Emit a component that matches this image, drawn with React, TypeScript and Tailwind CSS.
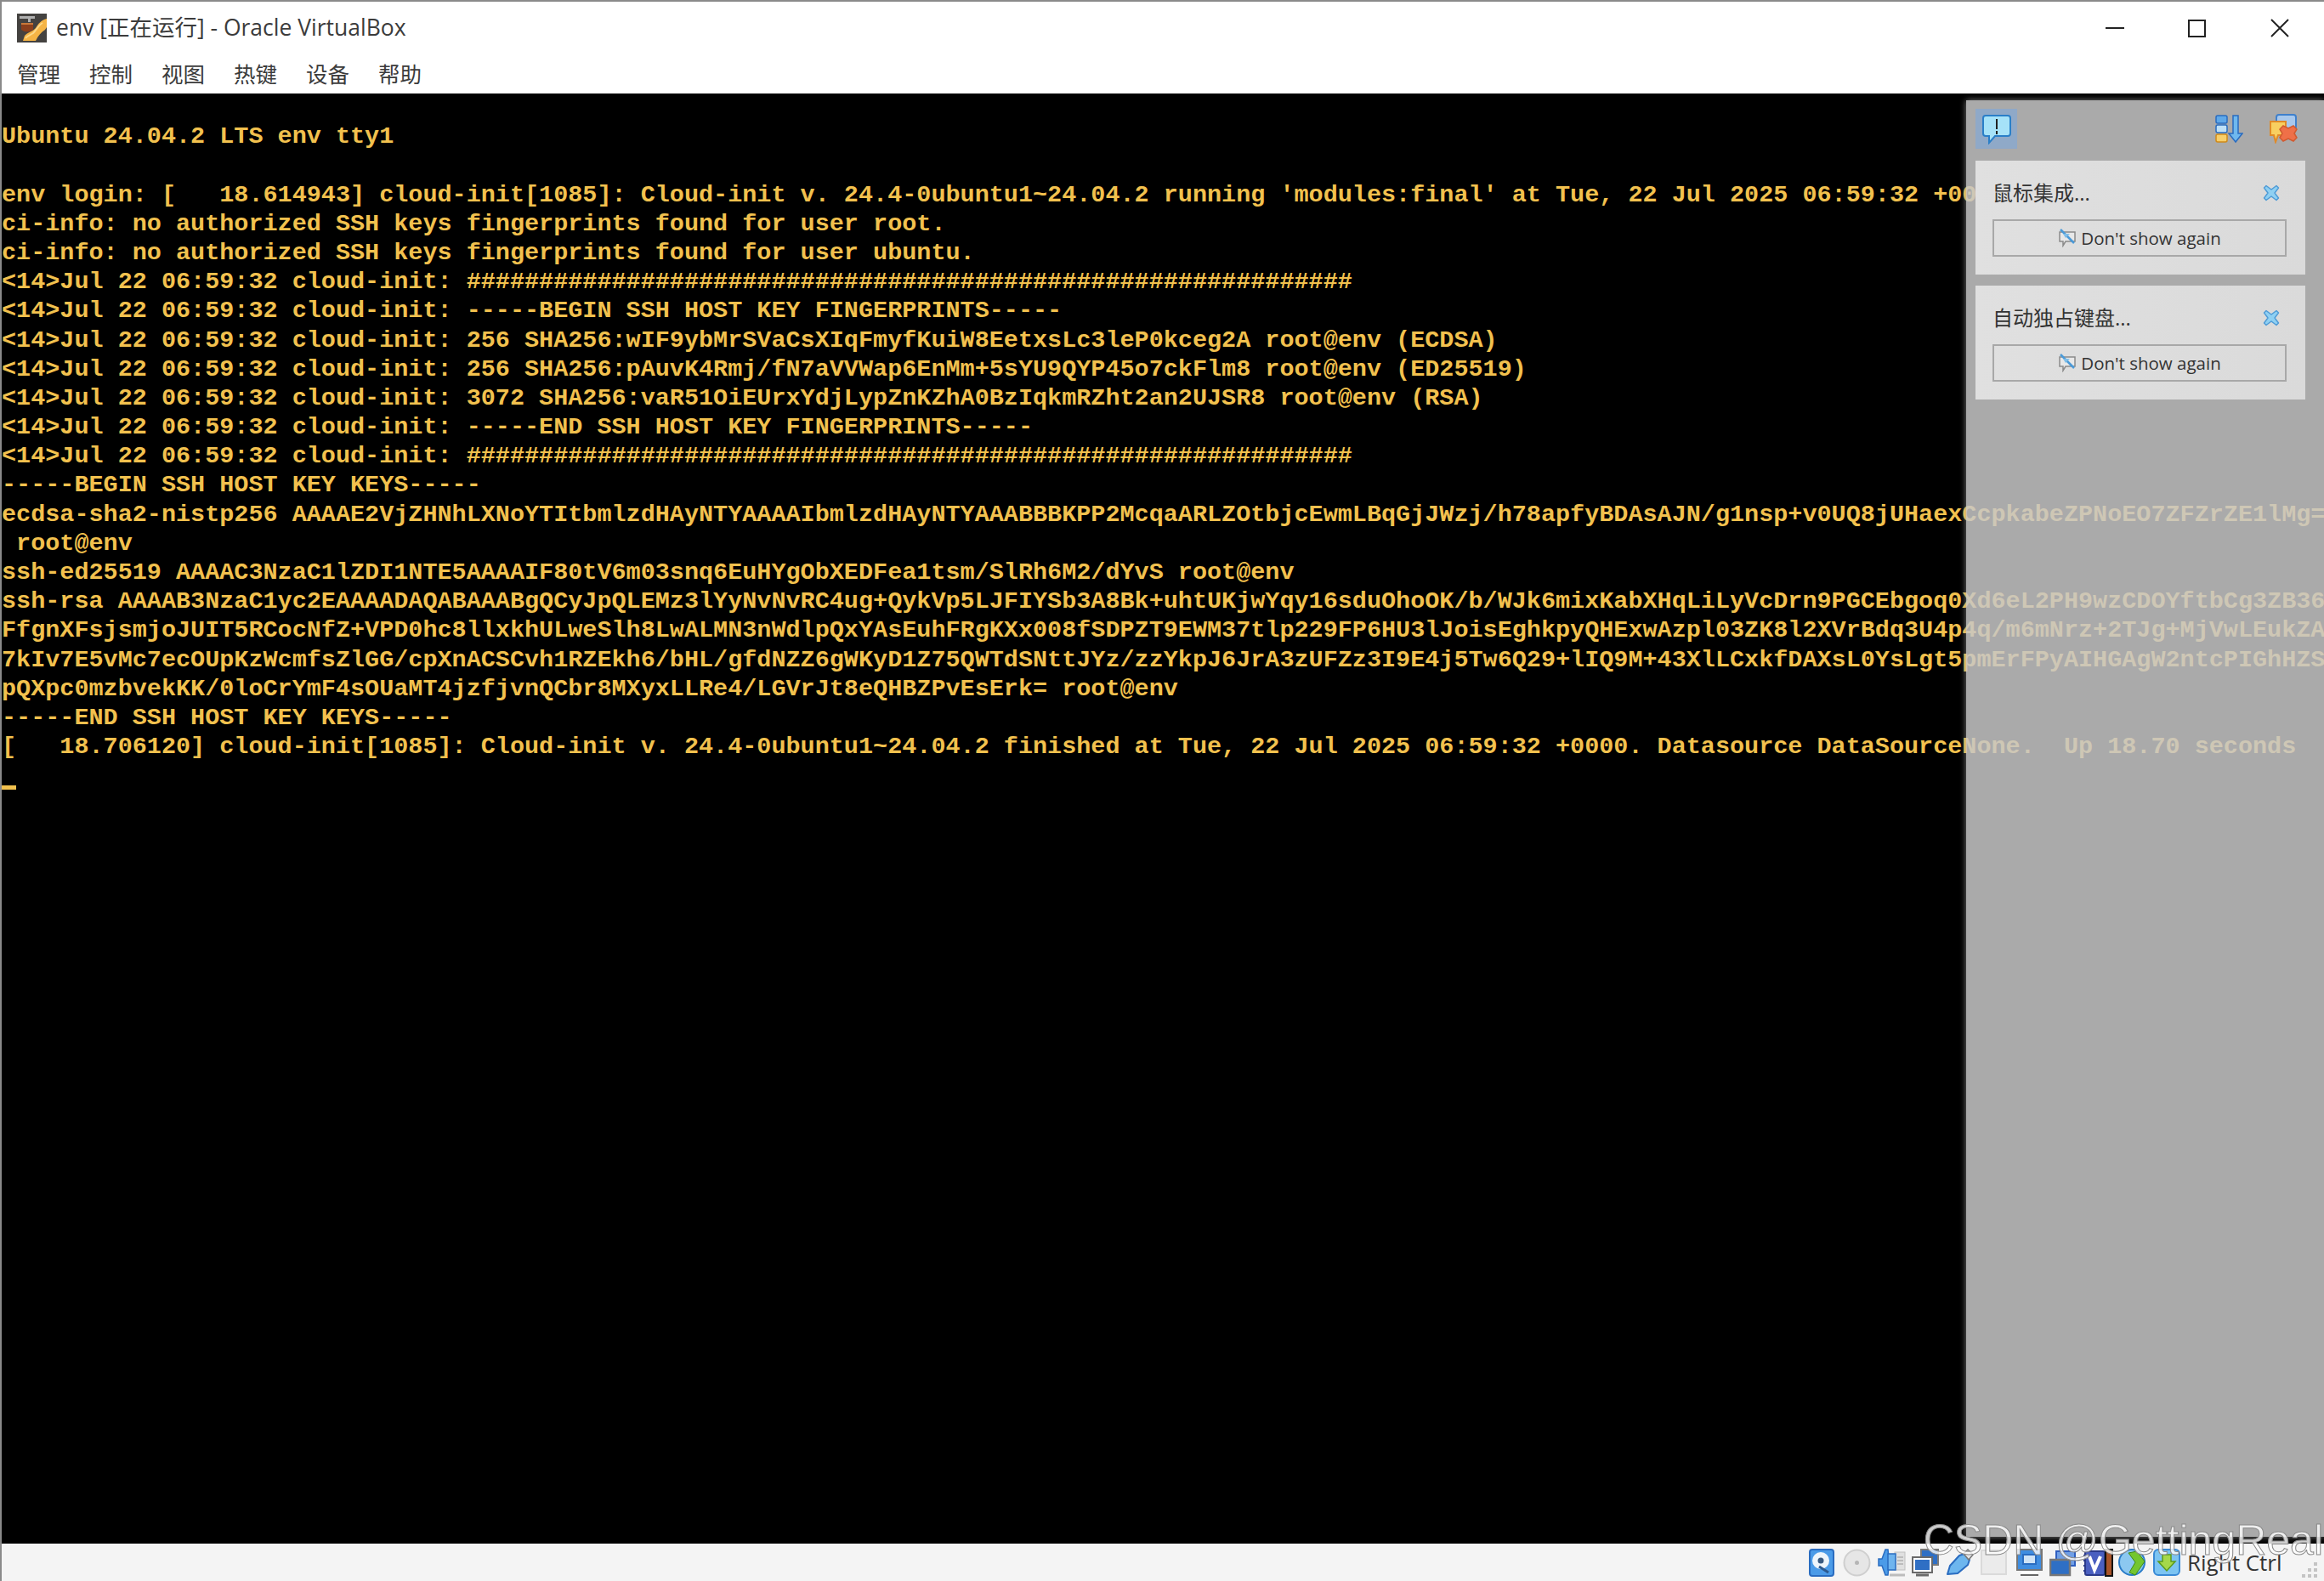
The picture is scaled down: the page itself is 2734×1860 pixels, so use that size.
import type { ReactNode } from "react";

const menus = ["管理", "控制", "视图", "热键", "设备", "帮助"];
const stamp = "<14>Jul 22 06:59:32 cloud-init: ";
const hashes = "#".repeat(61);

const rows = [
  "",
  "Ubuntu 24.04.2 LTS env tty1",
  "",
  "env login: [   18.614943] cloud-init[1085]: Cloud-init v. 24.4-0ubuntu1~24.04.2 running 'modules:final' at Tue, 22 Jul 2025 06:59:32 +0000",
  "ci-info: no authorized SSH keys fingerprints found for user root.",
  "ci-info: no authorized SSH keys fingerprints found for user ubuntu.",
  stamp + hashes,
  stamp + "-----BEGIN SSH HOST KEY FINGERPRINTS-----",
  stamp + "256 SHA256:wIF9ybMrSVaCsXIqFmyfKuiW8EetxsLc3leP0kceg2A root@env (ECDSA)",
  stamp + "256 SHA256:pAuvK4Rmj/fN7aVVWap6EnMm+5sYU9QYP45o7ckFlm8 root@env (ED25519)",
  stamp + "3072 SHA256:vaR51OiEUrxYdjLypZnKZhA0BzIqkmRZht2an2UJSR8 root@env (RSA)",
  stamp + "-----END SSH HOST KEY FINGERPRINTS-----",
  stamp + hashes,
  "-----BEGIN SSH HOST KEY KEYS-----",
  "ecdsa-sha2-nistp256 AAAAE2VjZHNhLXNoYTItbmlzdHAyNTYAAAAIbmlzdHAyNTYAAABBBKPP2McqaARLZOtbjcEwmLBqGjJWzj/h78apfyBDAsAJN/g1nsp+v0UQ8jUHaexCcpkabeZPNoEO7ZFZrZE1lMg=",
  " root@env",
  "ssh-ed25519 AAAAC3NzaC1lZDI1NTE5AAAAIF80tV6m03snq6EuHYgObXEDFea1tsm/SlRh6M2/dYvS root@env",
  "ssh-rsa AAAAB3NzaC1yc2EAAAADAQABAAABgQCyJpQLEMz3lYyNvNvRC4ug+QykVp5LJFIYSb3A8Bk+uhtUKjwYqy16sduOhoOK/b/WJk6mixKabXHqLiLyVcDrn9PGCEbgoq0Xd6eL2PH9wzCDOYftbCg3ZB36",
  "FfgnXFsjsmjoJUIT5RCocNfZ+VPD0hc8llxkhULweSlh8LwALMN3nWdlpQxYAsEuhFRgKXx008fSDPZT9EWM37tlp229FP6HU3lJoisEghkpyQHExwAzpl03ZK8l2XVrBdq3U4p4q/m6mNrz+2TJg+MjVwLEukZA",
  "7kIv7E5vMc7ecOUpKzWcmfsZlGG/cpXnACSCvh1RZEkh6/bHL/gfdNZZ6gWKyD1Z75QWTdSNttJYz/zzYkpJ6JrA3zUFZz3I9E4j5Tw6Q29+lIQ9M+43XlLCxkfDAXsL0YsLgt5pmErFPyAIHGAgW2ntcPIGhHZS",
  "pQXpc0mzbvekKK/0loCrYmF4sOUaMT4jzfjvnQCbr8MXyxLLRe4/LGVrJt8eQHBZPvEsErk= root@env",
  "-----END SSH HOST KEY KEYS-----",
  "[   18.706120] cloud-init[1085]: Cloud-init v. 24.4-0ubuntu1~24.04.2 finished at Tue, 22 Jul 2025 06:59:32 +0000. Datasource DataSourceNone.  Up 18.70 seconds",
];

function Icon({ w = 32, h = 33, children }: { w?: number; h?: number; children: ReactNode }) {
  return (
    <svg width={w} height={h} viewBox={`0 0 ${w} ${h}`} className="shrink-0">
      {children}
    </svg>
  );
}

function AppLogo() {
  return (
    <svg width="35" height="34" viewBox="0 0 35 34" className="shrink-0">
      <rect width="35" height="34" fill="#444240" />
      <path d="M3 3H21V6H16V10H13V6H3Z" fill="#b0b0b0" />
      <path d="M5 11H19V19Q12 24 5 19Z" fill="#8a3f1c" />
      <path d="M5 11H19V13H5Z" fill="#c9793a" />
      <path d="M35 6C28 8 25 12 22 17C19 21 12 22 9 26L7 32H22C25 26 28 22 33 19L35 16Z" fill="#f5b445" />
      <path d="M30 11C25 14 23 19 19 23C16 25 12 26 10 29" stroke="#fbd98a" strokeWidth="2" fill="none" />
    </svg>
  );
}

function CloseBlue() {
  return (
    <svg width="20" height="20" viewBox="0 0 20 20" className="shrink-0">
      <path
        d="M4 1.5L10 6L16 1.5L18.5 4L14 10L18.5 16L16 18.5L10 14L4 18.5L1.5 16L6 10L1.5 4Z"
        fill="#8fd0f2"
        stroke="#4d9ad6"
        strokeWidth="1.4"
        strokeLinejoin="round"
      />
    </svg>
  );
}

function NoShow() {
  return (
    <svg width="22" height="22" viewBox="0 0 22 22" className="shrink-0">
      <path d="M2 4H20V15H9L6 20V15H2Z" fill="#e8e8e8" stroke="#8a8a8a" strokeWidth="1.5" />
      <path d="M3 1L19 17" stroke="#4a9ad8" strokeWidth="2.5" />
      <path d="M6 6H14L9 11Z" fill="#7fbde8" />
    </svg>
  );
}

function Notice({ title }: { title: string }) {
  return (
    <div className="flex h-[134px] flex-col bg-gradient-to-r from-[#e0e0e0] to-[#dadada] px-[20px] pt-[19px]">
      <div className="flex h-[38px] items-center justify-between pr-[10px]">
        <span className="text-[24px] leading-none text-[#333]">{title}</span>
        <CloseBlue />
      </div>
      <button className="mt-[12px] flex h-[44px] w-[346px] items-center justify-center gap-[5px] border-2 border-[#a8a8a8] text-[#333]">
        <NoShow />
        <span className="font-['Open_Sans','Noto_Sans',sans-serif] text-[20.5px]">Don't show again</span>
      </button>
    </div>
  );
}

function StatusIcons() {
  return (
    <div className="flex items-center">
      <div className="ml-[2126px]" />
      {/* hard disk */}
      <Icon w={30}>
        <rect x="1" y="1" width="28" height="31" rx="3" fill="#4b9be8" stroke="#2a6cc0" strokeWidth="2" />
        <ellipse cx="14" cy="14" rx="10" ry="10" fill="#eef5fb" />
        <circle cx="14" cy="14" r="3.5" fill="#3a5a80" />
        <path d="M12 21L23 28" stroke="#2c5a90" strokeWidth="3" />
      </Icon>
      {/* cd */}
      <div className="ml-[10px]">
        <Icon w={33}>
          <circle cx="16.5" cy="16.5" r="15" fill="#e6e6e6" stroke="#cfcfcf" strokeWidth="2" />
          <circle cx="16.5" cy="16.5" r="2.5" fill="#b5b5b5" />
        </Icon>
      </div>
      {/* audio */}
      <div className="ml-[8px]">
        <Icon w={33}>
          <rect x="20" y="4" width="12" height="21" fill="#e0e0e0" stroke="#c0c0c0" />
          <path d="M23 10h7M23 14h7M23 18h7" stroke="#b0b0b0" strokeWidth="1.5" />
          <path d="M14 31h18" stroke="#bcbcbc" strokeWidth="3" />
          <path d="M1 12H5L9 1H12Q14 15 12 31H9L5 20H1Z" fill="#4b9be8" stroke="#2a6cc0" strokeWidth="1.5" />
          <rect x="12" y="6" width="9" height="19" fill="#6fb4ee" stroke="#2a6cc0" strokeWidth="1.5" />
        </Icon>
      </div>
      {/* network */}
      <div className="ml-[7px]">
        <Icon w={32}>
          <rect x="11" y="1" width="20" height="18" fill="#2f6fc4" stroke="#7a7a7a" strokeWidth="2" />
          <rect x="1" y="10" width="23" height="18" fill="#ffffff" stroke="#6a6a6a" strokeWidth="2" />
          <rect x="4" y="13" width="17" height="12" fill="#2f6fc4" />
          <path d="M5 31h15" stroke="#6a6a6a" strokeWidth="3" />
        </Icon>
      </div>
      {/* usb */}
      <div className="ml-[9px]">
        <Icon>
          <path d="M1 30L4 20L15 8L21 6L27 13L25 19L13 29Z" fill="#6db6ee" stroke="#2a6cc0" strokeWidth="2" strokeLinejoin="round" />
          <path d="M20 6L25 1L31 7L26 13Z" fill="#e6e6e6" stroke="#777" strokeWidth="1.5" />
        </Icon>
      </div>
      {/* shared folder */}
      <div className="ml-[8px]">
        <Icon w={31}>
          <rect x="1" y="2" width="29" height="28" fill="#ebebeb" stroke="#dadada" strokeWidth="2" />
        </Icon>
      </div>
      {/* display */}
      <div className="ml-[11px]">
        <Icon w={31}>
          <rect x="1" y="1" width="29" height="24" fill="#3f8de0" stroke="#777" strokeWidth="2" />
          <rect x="8" y="7" width="15" height="11" fill="#cfe3f6" stroke="#2a6cc0" strokeWidth="2" />
          <path d="M6 28h19" stroke="#fff" strokeWidth="3" />
          <path d="M5 31h21" stroke="#666" strokeWidth="2" />
        </Icon>
      </div>
      {/* capture */}
      <div className="ml-[8px]">
        <Icon w={31}>
          <rect x="8" y="3" width="22" height="17" fill="#6f9fe6" stroke="#2f5fc0" strokeWidth="2" />
          <rect x="1" y="13" width="23" height="18" fill="#2f6fc4" stroke="#777" strokeWidth="2.5" />
        </Icon>
      </div>
      {/* vt-x and mouse grab bar */}
      <div className="ml-[9px]">
        <Icon w={35}>
          <rect x="2" y="3" width="23" height="28" rx="2" fill="#4a5fc0" stroke="#2b3a8a" strokeWidth="2" />
          <path d="M0 8h2M0 14h2M0 20h2M0 26h2" stroke="#2b3a8a" strokeWidth="2" />
          <path d="M7 9L13 25L20 9" stroke="#fff" strokeWidth="4" fill="none" />
          <rect x="26" y="1" width="8" height="31" fill="#a8542a" stroke="#111" strokeWidth="2" />
        </Icon>
      </div>
      {/* globe */}
      <div className="ml-[6px]">
        <Icon w={33}>
          <circle cx="16" cy="16" r="15" fill="#8cc8f0" stroke="#2a7cc8" strokeWidth="2" />
          <path d="M12 5L22 3L31 15L20 31L13 28L20 16Z" fill="#74c62f" stroke="#3f8a18" strokeWidth="1" />
        </Icon>
      </div>
      {/* guest additions */}
      <div className="ml-[8px]">
        <Icon>
          <rect x="1" y="1" width="30" height="30" rx="5" fill="#7cc4f2" stroke="#3a8ad6" strokeWidth="2" />
          <path d="M11 7h10v8h5L16 26L6 15h5Z" fill="#a5d84a" stroke="#5a9a1c" strokeWidth="1.5" />
        </Icon>
      </div>
    </div>
  );
}

export default function App() {
  return (
    <div className="flex h-[1860px] w-[2734px] flex-col overflow-hidden border-t-2 border-l-2 border-[#8a8a8a] bg-white font-['Open_Sans','Noto_Sans_CJK_SC',sans-serif]">
      <header className="flex h-[62px] shrink-0 items-center pl-[18px] pr-[41px]">
        <AppLogo />
        <span className="ml-[11px] text-[26.5px] text-[#3c3c3c]">env [正在运行] - Oracle VirtualBox</span>
        <div className="ml-auto flex items-center">
          <div className="h-[2px] w-[22px] bg-[#222]" />
          <div className="ml-[75px] h-[21px] w-[21px] border-2 border-[#222]" />
          <svg width="22" height="22" viewBox="0 0 22 22" className="ml-[76px]">
            <path d="M1 1L21 21M21 1L1 21" stroke="#222" strokeWidth="2" />
          </svg>
        </div>
      </header>

      <nav className="flex h-[46px] shrink-0 items-start gap-[34px] pl-[18px] pt-[4px] text-[25.5px] leading-[38px] text-[#3c3c3c]">
        {menus.map((m) => (
          <span key={m}>{m}</span>
        ))}
      </nav>

      <main className="relative min-h-0 flex-1 overflow-hidden bg-black font-['Liberation_Mono',monospace] text-[28.48px] leading-[34.2px] font-bold text-[#f2c14e]">
        {rows.map((r, i) => (
          <div key={i} className="h-[34.2px] whitespace-pre">
            {r}
          </div>
        ))}
        <div className="h-[5px] w-[17px] translate-y-[28px] bg-[#f2c14e]" />

        <aside className="absolute top-[8px] right-0 bottom-[8px] w-[421px] bg-[#c8c8c8]/85 px-[11px] pt-[10px] font-['Open_Sans','Noto_Sans_CJK_SC',sans-serif] font-normal shadow-[0_0_7px_rgba(170,170,170,0.75)]">
          <div className="flex h-[47px] items-center pr-[20px]">
            <div className="flex h-[47px] w-[49px] items-center justify-center border border-[#8fa8c8] bg-[#8fa9c8]">
              <svg width="34" height="36" viewBox="0 0 34 36">
                <path d="M4 2H30Q33 2 33 5V23Q33 26 30 26H15L8 34V26H4Q1 26 1 23V5Q1 2 4 2Z" fill="#a6e2f8" stroke="#2a7fc8" strokeWidth="2" />
                <path d="M17 6V18M17 20V24" stroke="#222" strokeWidth="2" />
              </svg>
            </div>
            <svg width="33" height="34" viewBox="0 0 33 34" className="ml-auto">
              <rect x="1" y="1" width="13" height="9" rx="2" fill="#5fa8e8" stroke="#2a6cc0" strokeWidth="1.5" />
              <rect x="1" y="12" width="13" height="9" rx="2" fill="#bfe0f6" stroke="#2a6cc0" strokeWidth="1.5" />
              <rect x="1" y="23" width="13" height="9" rx="2" fill="#f7cf6a" stroke="#d08a1a" strokeWidth="1.5" />
              <path d="M21 1H27V22H32L24 32L16 22H21Z" fill="#6fb8ee" stroke="#2a6cc0" strokeWidth="1.5" />
            </svg>
            <svg width="34" height="35" viewBox="0 0 34 35" className="ml-[30px]">
              <rect x="9" y="1" width="23" height="19" rx="3" fill="#a8c8ec" stroke="#3f80cc" strokeWidth="2" />
              <path d="M2 9H20V25H11L8 33L6 25H2Z" fill="#f8cf60" stroke="#e08a28" strokeWidth="2" />
              <path d="M17 14L23 17L29 14L33 18L30 23L33 28L29 32L23 29L17 32L13 28L16 23L13 18Z" fill="#ef7048" stroke="#d05a30" strokeWidth="1.5" />
            </svg>
          </div>
          <div className="mt-[14px] flex w-[388px] flex-col gap-[13px]">
            <Notice title="鼠标集成..." />
            <Notice title="自动独占键盘..." />
          </div>
        </aside>
      </main>

      <footer className="relative flex h-[44px] shrink-0 items-center bg-[#f4f4f4] font-['Open_Sans',sans-serif]">
        <StatusIcons />
        <span className="ml-[8px] text-[26px] text-[#333]">Right Ctrl</span>
        <div className="absolute right-[8px] bottom-[4px] grid grid-cols-3 gap-[3px]">
          {[0, 1, 2, 3, 4, 5, 6, 7, 8].map((n) => (
            <div key={n} className={n === 0 || n === 1 || n === 3 ? "size-[4px]" : "size-[4px] bg-[#c4c4c4]"} />
          ))}
        </div>
        <span className="absolute right-[1px] -top-[29px] font-['Liberation_Sans',sans-serif] text-[50px] leading-none text-white/80 [-webkit-text-stroke:1px_#8a8a8a]">
          CSDN @GettingReal
        </span>
      </footer>
    </div>
  );
}
